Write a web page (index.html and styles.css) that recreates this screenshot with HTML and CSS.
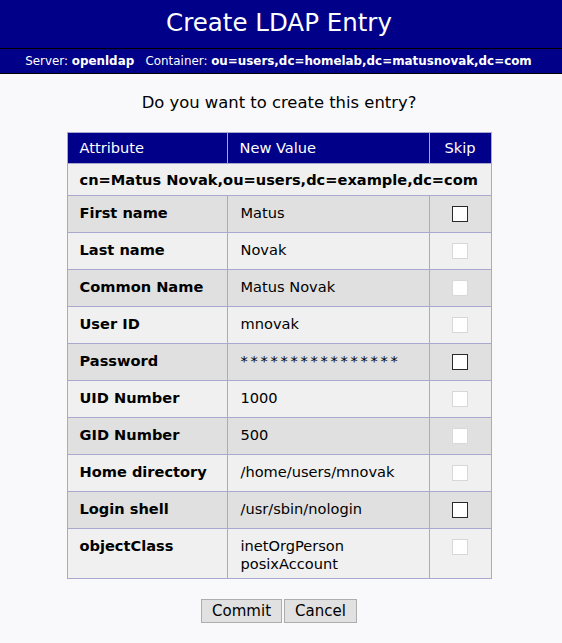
FILE: index.html
```html
<!DOCTYPE html>
<html>
<head>
<meta charset="utf-8">
<title>Create LDAP Entry</title>
<link rel="stylesheet" href="styles.css">
</head>
<body>
<h1 class="title">Create LDAP Entry</h1>
<div class="subtitle">Server: <b>openldap</b>&nbsp;&nbsp;&nbsp;Container: <b>ou=users,dc=homelab,dc=matusnovak,dc=com</b></div>
<p class="question">Do you want to create this entry?</p>
<form class="form">
<table class="entry">
<thead>
<tr><th class="c-attr">Attribute</th><th class="c-val">New Value</th><th class="c-skip">Skip</th></tr>
</thead>
<tbody>
<tr class="dn"><td colspan="3">cn=Matus Novak,ou=users,dc=example,dc=com</td></tr>
<tr class="dark"><td class="attr">First name</td><td class="val">Matus</td><td class="skip"><input type="checkbox" class="cb"></td></tr>
<tr class="light"><td class="attr">Last name</td><td class="val">Novak</td><td class="skip"><input type="checkbox" class="cb" disabled></td></tr>
<tr class="dark"><td class="attr">Common Name</td><td class="val">Matus Novak</td><td class="skip"><input type="checkbox" class="cb" disabled></td></tr>
<tr class="light"><td class="attr">User ID</td><td class="val">mnovak</td><td class="skip"><input type="checkbox" class="cb" disabled></td></tr>
<tr class="dark"><td class="attr">Password</td><td class="val pw">****************</td><td class="skip"><input type="checkbox" class="cb"></td></tr>
<tr class="light"><td class="attr">UID Number</td><td class="val">1000</td><td class="skip"><input type="checkbox" class="cb" disabled></td></tr>
<tr class="dark"><td class="attr">GID Number</td><td class="val">500</td><td class="skip"><input type="checkbox" class="cb" disabled></td></tr>
<tr class="light"><td class="attr">Home directory</td><td class="val">/home/users/mnovak</td><td class="skip"><input type="checkbox" class="cb" disabled></td></tr>
<tr class="dark"><td class="attr">Login shell</td><td class="val">/usr/sbin/nologin</td><td class="skip"><input type="checkbox" class="cb"></td></tr>
<tr class="light last"><td class="attr">objectClass</td><td class="val">inetOrgPerson<br>posixAccount</td><td class="skip"><input type="checkbox" class="cb" disabled></td></tr>
</tbody>
</table>
<div class="actions">
<button type="button" class="btn">Commit</button>
<button type="button" class="btn">Cancel</button>
</div>
</form>
</body>
</html>
```
FILE: styles.css
```css
html, body {
  margin: 0;
  padding: 0;
  background: #f9f9fc;
  font-family: "DejaVu Sans", Verdana, sans-serif;
  color: #000;
}
.title {
  margin: 0;
  height: 48px;
  line-height: 46px;
  background: #000088;
  color: #fff;
  font-size: 24.5px;
  font-weight: normal;
  text-align: center;
  border-bottom: 1px solid #000;
  padding-right: 4px;
}
.subtitle {
  height: 24px;
  line-height: 24px;
  background: #000088;
  color: #fff;
  font-size: 11.9px;
  text-align: center;
  border-bottom: 1px solid #000;
  padding-right: 5px;
}
.question {
  margin: 19px 0 0;
  height: 39px;
  line-height: 20px;
  text-align: center;
  font-size: 16.4px;
  padding-right: 4px;
}
.form {
  margin: 0;
  padding-right: 4px;
}
.entry {
  margin: 0 auto;
  border-collapse: collapse;
  border: 1px solid #a8a8d0;
  font-size: 14.6px;
  line-height: 18px;
}
.entry th, .entry td {
  border: 1px solid #a8a8d0;
  text-align: left;
  vertical-align: top;
  padding: 0 12px;
}
.entry th {
  background: #000088;
  color: #fff;
  font-weight: normal;
  height: 30px;
  vertical-align: middle;
}
.c-attr { width: 135px; }
.c-val { width: 177px; }
.c-skip { width: 37px; }
.entry .c-skip { text-align: center; }
.dn td {
  background: #f0f0f0;
  font-weight: bold;
  height: 31px;
  vertical-align: middle;
}
.dark td { background: #e0e0e0; }
.light td { background: #f0f0f0; }
.entry .attr {
  font-weight: bold;
  height: 37px;
  padding-top: 8px;
  box-sizing: border-box;
}
.entry .val {
  padding-top: 8px;
  padding-left: 13px;
  padding-right: 11px;
}
.entry .pw {
  letter-spacing: 2.7px;
}
.entry .skip {
  text-align: center;
  vertical-align: top;
  padding-top: 10px;
}
.entry .last .val { padding-bottom: 5px; }
.cb {
  appearance: none;
  -webkit-appearance: none;
  width: 16px;
  height: 16px;
  margin: 0;
  background: #fff;
  border: 1px solid #2a2a2a;
  vertical-align: top;
}
.cb:disabled {
  border-color: #d8d8d8;
}
.actions {
  display: flex;
  justify-content: center;
  gap: 2px;
  margin-top: 20px;
}
.btn {
  font-family: "DejaVu Sans", Verdana, sans-serif;
  font-size: 15px;
  background: #e1e1e1;
  border: 1px solid #adadad;
  padding: 1px 10px;
  margin: 0;
  color: #000;
  height: 24px;
}
```
